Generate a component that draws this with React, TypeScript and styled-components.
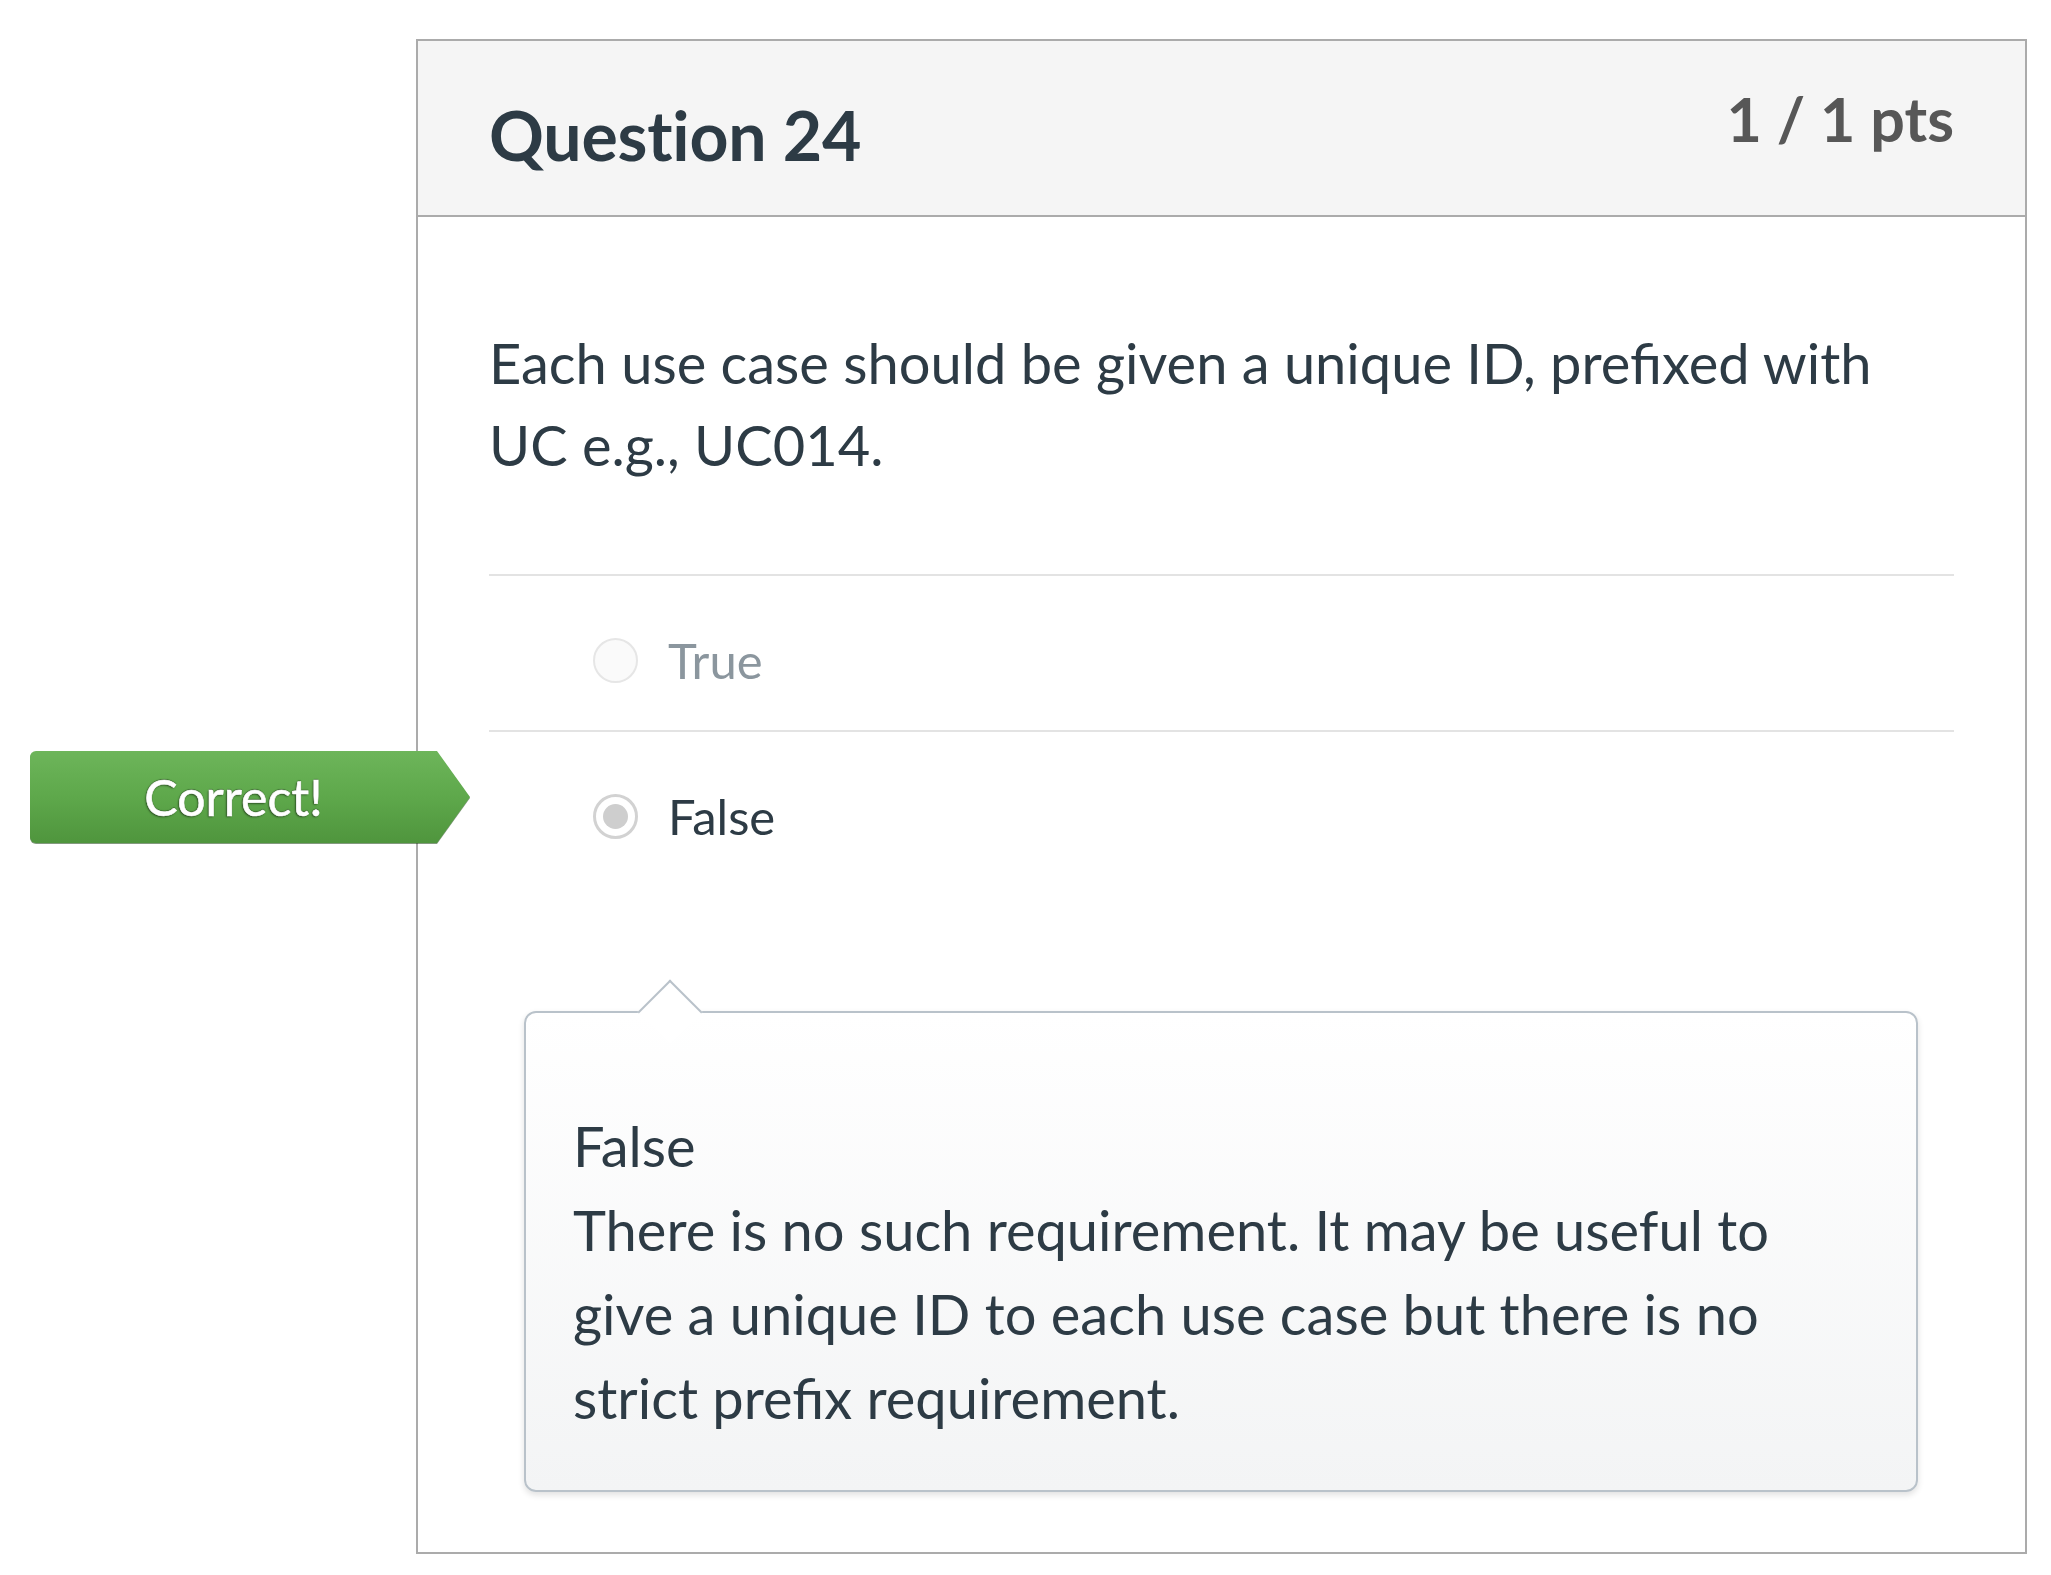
import React from "react";
import styled, { createGlobalStyle } from "styled-components";

const GlobalStyle = createGlobalStyle`
  html, body {
    margin: 0;
    padding: 0;
    background: #ffffff;
  }
  body {
    font-family: Lato, "Open Sans", "Liberation Sans", sans-serif;
    color: #2d3b45;
  }
  * { box-sizing: border-box; }
`;

const Page = styled.div`
  display: flex;
  padding: 39px 24px 0 416px;
`;

const Card = styled.section`
  position: relative;
  flex: 1;
  border: 2px solid #ababab;
  background: #ffffff;
`;

const Header = styled.header`
  display: flex;
  justify-content: space-between;
  align-items: flex-start;
  height: 176px;
  padding: 0 71px;
  background: #f5f5f5;
  border-bottom: 2px solid #ababab;
`;

const Title = styled.h2`
  margin: 58px 0 0;
  font-size: 68px;
  line-height: 72px;
  font-weight: 700;
  color: #2d3b45;
  letter-spacing: -0.2px;
`;

const Points = styled.div`
  margin-top: 46px;
  font-size: 61px;
  line-height: 63px;
  font-weight: 700;
  color: #575757;
`;

const Body = styled.div`
  padding: 105px 71px 60px;
`;

const QuestionText = styled.p`
  margin: 0;
  max-width: 1420px;
  font-size: 56px;
  line-height: 82px;
  color: #2d3b45;
`;

const Answers = styled.div`
  margin-top: 88px;
`;

const AnswerRow = styled.div`
  position: relative;
  display: flex;
  align-items: center;
  gap: 30px;
  padding: 60px 0 45px 104px;
  border-top: 2px solid #e3e3e3;
`;

const Radio = styled.span<{ $checked?: boolean }>`
  position: relative;
  flex: 0 0 auto;
  width: 45px;
  height: 45px;
  border-radius: 50%;
  background: ${(p) => (p.$checked ? "#ffffff" : "#fafafa")};
  border: ${(p) => (p.$checked ? "3px solid #d2d2d2" : "2px solid #e6e6e6")};
  &::after {
    content: "";
    display: ${(p) => (p.$checked ? "block" : "none")};
    position: absolute;
    left: 50%;
    top: 50%;
    width: 25px;
    height: 25px;
    margin: -12.5px 0 0 -12.5px;
    border-radius: 50%;
    background: #cecece;
  }
`;

const AnswerLabel = styled.span<{ $muted?: boolean }>`
  font-size: 49px;
  line-height: 49px;
  color: ${(p) => (p.$muted ? "#8b969e" : "#2d3b45")};
`;

const BadgeWrap = styled.div`
  position: absolute;
  top: 19px;
  left: -459px;
  filter: drop-shadow(0 1px 0.5px rgba(30, 70, 20, 0.55));
`;

const Badge = styled.div`
  width: 440px;
  height: 92px;
  padding-right: 33px;
  display: flex;
  align-items: center;
  justify-content: center;
  border-radius: 6px 0 0 6px;
  background: linear-gradient(to bottom, #6db55a 0%, #5ea84b 50%, #4f953d 100%);
  clip-path: polygon(0 0, 407px 0, 440px 50%, 407px 100%, 0 100%);
  color: #ffffff;
  font-size: 50px;
  font-weight: 400;
  -webkit-text-stroke: 0.6px #ffffff;
  text-shadow: 0 0 1px #2a5a1e, -1px 1px 2px rgba(0, 0, 0, 0.55), 0 -1px 1px rgba(0, 0, 0, 0.35);
`;

const Feedback = styled.div`
  position: relative;
  margin: 125px 36px 0 35px;
  padding: 91px 47px 50px;
  border: 2px solid #b9c2ca;
  border-radius: 12px;
  background: linear-gradient(to bottom, #ffffff 0%, #f3f4f5 100%);
  box-shadow: 0 3px 6px rgba(0, 0, 0, 0.12);
  &::before {
    content: "";
    position: absolute;
    left: 121px;
    top: -24px;
    width: 44px;
    height: 44px;
    background: #ffffff;
    border-left: 2px solid #b9c2ca;
    border-top: 2px solid #b9c2ca;
    transform: rotate(45deg);
  }
`;

const FeedbackText = styled.p`
  position: relative;
  margin: 0;
  font-size: 56px;
  line-height: 84px;
  color: #2d3b45;
`;

export default function App() {
  return (
    <>
      <GlobalStyle />
      <Page>
        <Card>
          <Header>
            <Title>Question 24</Title>
            <Points>1 / 1 pts</Points>
          </Header>
          <Body>
            <QuestionText>
              Each use case should be given a unique ID, prefixed with UC e.g., UC014.
            </QuestionText>
            <Answers>
              <AnswerRow>
                <Radio />
                <AnswerLabel $muted>True</AnswerLabel>
              </AnswerRow>
              <AnswerRow>
                <BadgeWrap>
                  <Badge>Correct!</Badge>
                </BadgeWrap>
                <Radio $checked />
                <AnswerLabel>False</AnswerLabel>
              </AnswerRow>
            </Answers>
            <Feedback>
              <FeedbackText>
                False
                <br />
                There is no such requirement. It may be useful to give a unique ID to each use case but there is no strict prefix requirement.
              </FeedbackText>
            </Feedback>
          </Body>
        </Card>
      </Page>
    </>
  );
}
